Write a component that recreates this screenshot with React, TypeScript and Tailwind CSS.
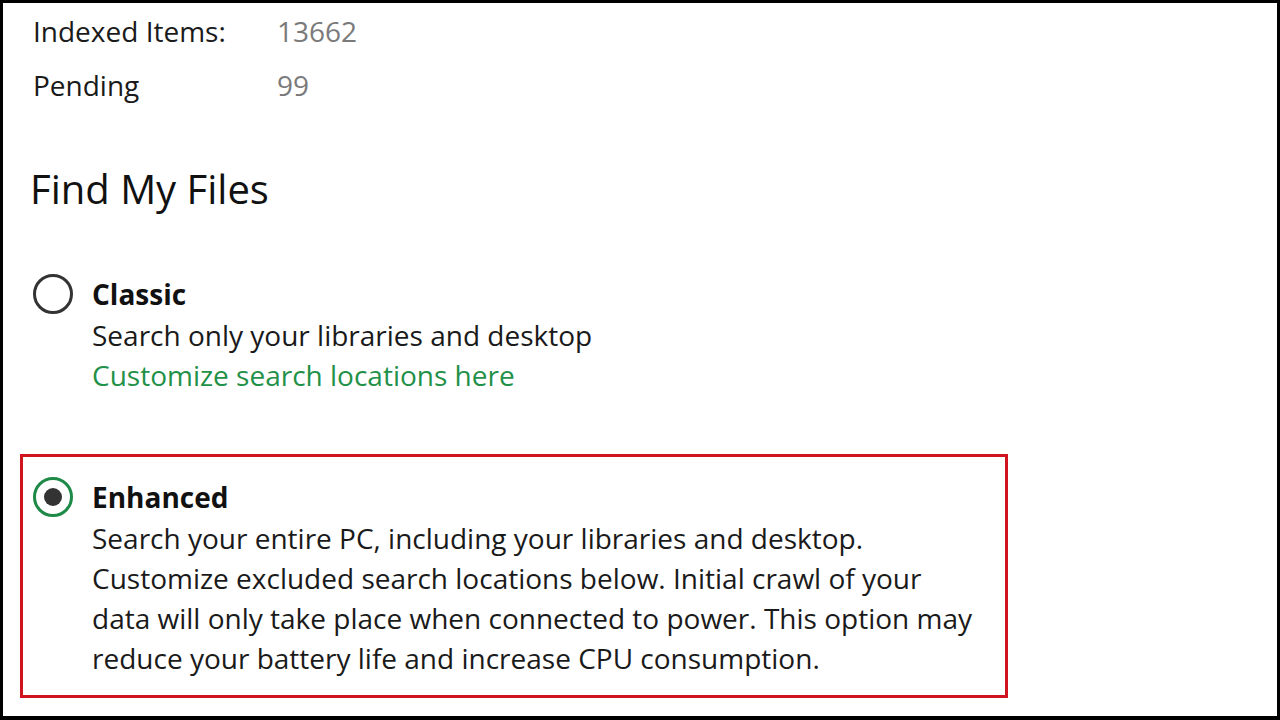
import clsx from "clsx";

const font = { fontFamily: '"Open Sans", "Noto Sans", sans-serif' };

function StatRow({ label, value }: { label: string; value: string }) {
  return (
    <div className="flex h-[54px] items-center">
      <span className="w-[244px] text-[28px] text-[#1a1a1a]">{label}</span>
      <span className="text-[28px] text-[#7a7a7a]">{value}</span>
    </div>
  );
}

function Radio({ checked }: { checked?: boolean }) {
  return (
    <div
      className={clsx(
        "flex size-[40px] shrink-0 items-center justify-center rounded-full border-[3px]",
        checked ? "border-[#1d8a48]" : "border-[#333333]",
      )}
    >
      {checked ? <div className="size-[18px] rounded-full bg-[#333333]" /> : null}
    </div>
  );
}

function Option({
  title,
  checked,
  lines,
  link,
}: {
  title: string;
  checked?: boolean;
  lines: string[];
  link?: string;
}) {
  return (
    <div className="flex items-start gap-[19px]">
      <div className="pt-[1px]">
        <Radio checked={checked} />
      </div>
      <div className="flex flex-col">
        <span className="h-[42px] text-[28px] font-bold leading-[42px] text-[#111111]">{title}</span>
        {lines.map((line, i) => (
          <span key={i} className="h-[40px] text-[28px] leading-[40px] text-[#1a1a1a]">
            {line}
          </span>
        ))}
        {link ? (
          <span className="h-[40px] text-[28px] leading-[40px] text-[#1f9148]">{link}</span>
        ) : null}
      </div>
    </div>
  );
}

export default function App() {
  return (
    <div className="h-[720px] w-[1280px] bg-black pb-[4px] pl-[3px] pr-[3px] pt-[3px]" style={font}>
      <div className="flex h-full flex-col bg-white pl-[30px] pt-[1px]">
        <StatRow label="Indexed Items:" value="13662" />
        <StatRow label="Pending" value="99" />
        <h1 className="-ml-[3px] mt-[50px] h-[54px] text-[40px] leading-[54px] text-[#111111]">
          Find My Files
        </h1>
        <div className="mt-[57px]">
          <Option
            title="Classic"
            lines={["Search only your libraries and desktop"]}
            link="Customize search locations here"
          />
        </div>
        <div className="-ml-[13px] mt-[59px] w-[988px] border-[3px] border-[#d0141f] pb-[17px] pl-[10px] pt-[19px]">
          <Option
            title="Enhanced"
            checked
            lines={[
              "Search your entire PC, including your libraries and desktop.",
              "Customize excluded search locations below. Initial crawl of your",
              "data will only take place when connected to power. This option may",
              "reduce your battery life and increase CPU consumption.",
            ]}
          />
        </div>
      </div>
    </div>
  );
}
